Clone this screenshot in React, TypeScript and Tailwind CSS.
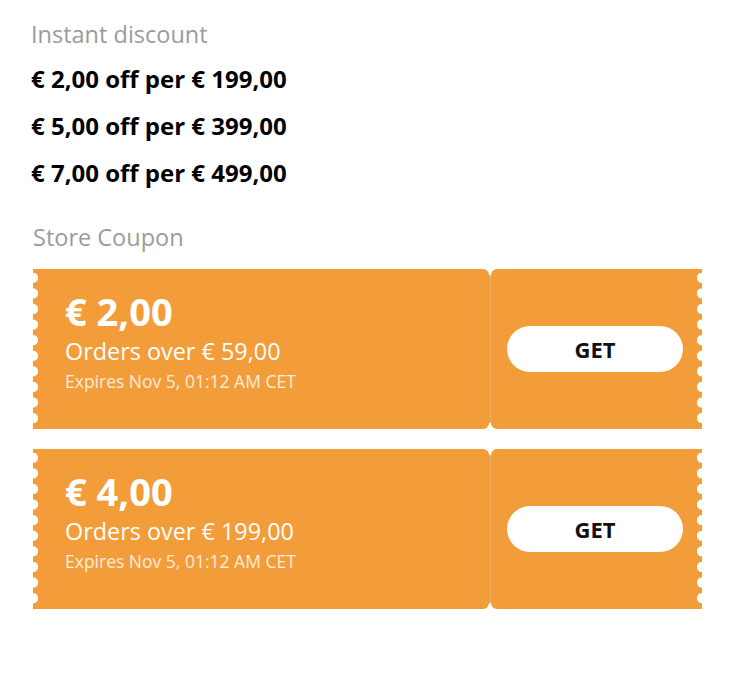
import React from "react"

type Coupon = {
  value: string
  minOrder: string
  expires: string
}

const discounts = [
  "€ 2,00 off per € 199,00",
  "€ 5,00 off per € 399,00",
  "€ 7,00 off per € 499,00",
]

const coupons: Coupon[] = [
  { value: "€ 2,00", minOrder: "Orders over € 59,00", expires: "Expires Nov 5, 01:12 AM CET" },
  { value: "€ 4,00", minOrder: "Orders over € 199,00", expires: "Expires Nov 5, 01:12 AM CET" },
]

function CouponCard({ coupon }: { coupon: Coupon }) {
  return (
    <div className="relative flex h-[160px] w-[669px]">
      {/* main part */}
      <div className="flex-1 bg-[#f29d3a] rounded-r-[6px] pl-[32px] pt-[19px] text-white">
        <p className="text-[38px] leading-[46px] font-bold">{coupon.value}</p>
        <p className="mt-[3px] text-[23.4px] leading-[28px]">{coupon.minOrder}</p>
        <p className="mt-[4px] text-[17.5px] leading-[24px] text-white/80">{coupon.expires}</p>
      </div>

      {/* perforation */}
      <div className="w-[2px] my-[6px] bg-[#f29d3a] flex justify-center">
        <div className="h-full border-l border-dotted border-[#f8c890]"></div>
      </div>

      {/* action part */}
      <div className="w-[211px] bg-[#f29d3a] rounded-l-[6px] pr-[3px] flex items-center justify-center">
        <button className="w-[176px] h-[46px] rounded-full bg-white text-[#111] text-[22px] font-bold">
          GET
        </button>
      </div>

      {/* scalloped edges */}
      <div className="absolute left-0 top-[1px] bottom-[3px] w-[6px] bg-[radial-gradient(circle_at_0_50%,#ffffff_4.8px,transparent_5.4px)] bg-[length:6px_15.6px]"></div>
      <div className="absolute right-0 top-[1px] bottom-[3px] w-[6px] bg-[radial-gradient(circle_at_100%_50%,#ffffff_4.8px,transparent_5.4px)] bg-[length:6px_15.6px]"></div>
    </div>
  )
}

export default function App() {
  return (
    <div className="min-h-screen bg-white font-['Open_Sans',sans-serif]">
      <div className="pl-[31px] pt-[18px]">
        <h3 className="text-[23.5px] leading-[32px] text-[#9b9b9b]">Instant discount</h3>

        <ul className="mt-[5px]">
          {discounts.map((d) => (
            <li key={d} className="text-[24px] leading-[47px] font-bold text-black">
              {d}
            </li>
          ))}
        </ul>

        <h3 className="mt-[25px] pl-[2px] text-[23.5px] leading-[32px] text-[#9b9b9b]">Store Coupon</h3>

        <div className="mt-[16px] pl-[2px] flex flex-col gap-[20px]">
          {coupons.map((c) => (
            <CouponCard key={c.minOrder} coupon={c} />
          ))}
        </div>
      </div>
    </div>
  )
}
